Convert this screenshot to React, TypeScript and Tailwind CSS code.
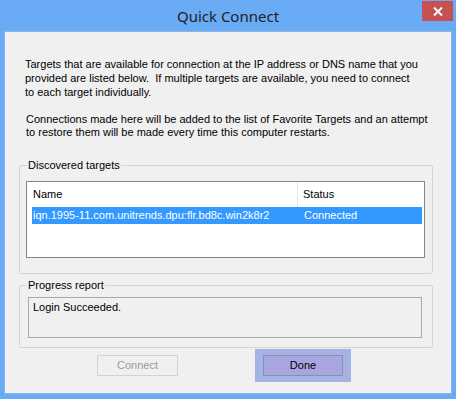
import React from 'react'

const body = { fontFamily: '"Liberation Sans", Arial, sans-serif' }

export default function App() {
  return (
    <div className="w-[456px] h-[399px] bg-[#6aabf5] flex flex-col overflow-hidden" style={body}>
      {/* title bar */}
      <div className="relative h-[31px] shrink-0 flex items-center justify-center">
        <span className="text-[15px] text-[#1e1e1e] leading-none pt-[1px]" style={{ fontFamily: '"Noto Sans", "Open Sans", sans-serif' }}>
          Quick Connect
        </span>
        <button className="absolute right-[3px] top-[1px] w-[31px] h-[20px] bg-[#c75050] flex items-center justify-center">
          <svg width="10" height="9" viewBox="0 0 10 9">
            <path d="M1 0.5 L9 8.5 M9 0.5 L1 8.5" stroke="white" strokeWidth="2" />
          </svg>
        </button>
      </div>

      {/* client area */}
      <div className="mx-[4px] h-[363px] bg-[#f0f0f0] border border-[#8eb4e3] flex flex-col text-[11px] text-black">
        <p className="mt-[25px] ml-[20px] leading-[14px]">
          Targets that are available for connection at the IP address or DNS name that you
          <br />
          provided are listed below.&nbsp; If multiple targets are available, you need to connect
          <br />
          to each target individually.
        </p>
        <p className="mt-[14px] ml-[21px] leading-[13px]">
          Connections made here will be added to the list of Favorite Targets and an attempt
          <br />
          to restore them will be made every time this computer restarts.
        </p>

        <fieldset className="mt-[19px] ml-[14px] w-[414px] border border-[#d5d5d5] rounded-[2px]">
          <legend className="ml-[7px] px-[1px] leading-[14px]">Discovered targets</legend>
          <div className="mt-[9px] ml-[6px] mr-[7px] mb-[15px] h-[77px] bg-white border border-[#828790] flex flex-col">
            <div className="h-[25px] flex items-center shrink-0">
              <div className="w-[271px] h-full pl-[6px] flex items-center border-r border-[#e5e5e5]">Name</div>
              <div className="pl-[5px]">Status</div>
            </div>
            <div className="ml-[5px] mr-[2px] h-[17px] bg-[#3399ff] text-white flex items-center">
              <div className="w-[266px] pl-[1px]">iqn.1995-11.com.unitrends.dpu:flr.bd8c.win2k8r2</div>
              <div className="pl-[6px]">Connected</div>
            </div>
          </div>
        </fieldset>

        <fieldset className="mt-[4px] ml-[14px] w-[414px] border border-[#d5d5d5] rounded-[2px]">
          <legend className="ml-[7px] px-[1px] leading-[14px]">Progress report</legend>
          <div className="mt-[5px] ml-[8px] mr-[10px] mb-[9px] h-[41px] border border-[#a8a8a8] pl-[4px] pt-[2px] leading-[14px]">
            Login Succeeded.
          </div>
        </fieldset>

        <div className="mt-[1px] flex items-center">
          <button className="ml-[92px] w-[81px] h-[21px] border border-[#d2d2d2] bg-[#f0f0f0] text-[#9a9a9a] text-[11px]">
            Connect
          </button>
          <div className="ml-[77px] px-[8px] py-[6px] bg-[#a4b2e4]">
            <button className="w-[80px] h-[21px] border border-[#8d8fa6] bg-[#a7a6e1] text-black text-[11px]">
              Done
            </button>
          </div>
        </div>
      </div>
    </div>
  )
}
